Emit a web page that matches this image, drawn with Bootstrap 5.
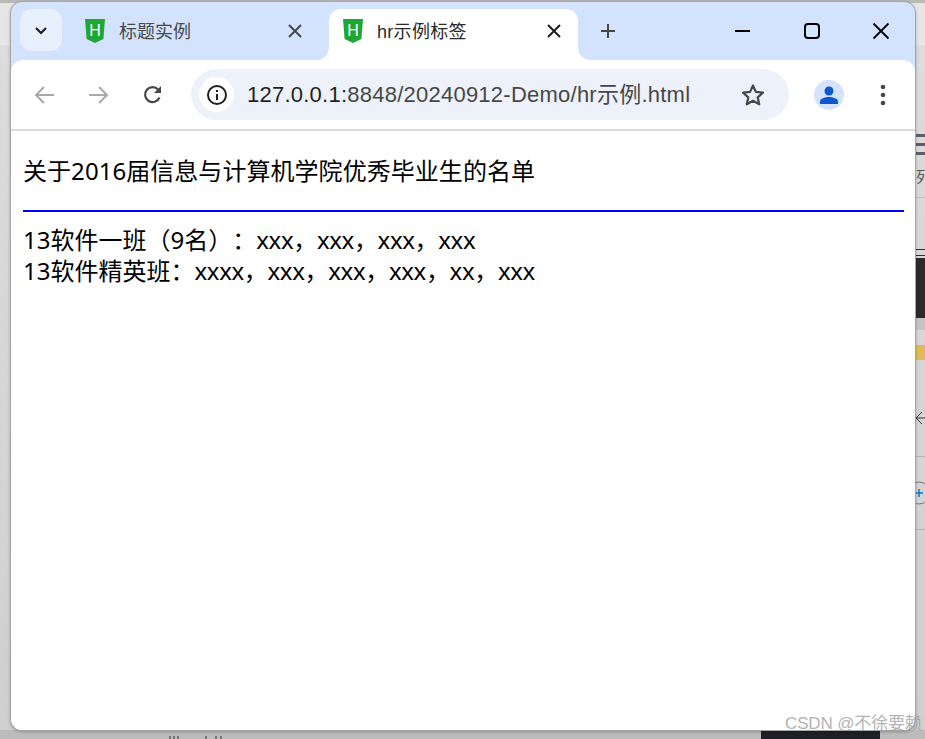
<!DOCTYPE html>
<html lang="zh-CN">
<head>
  <meta charset="UTF-8" />
  <meta name="viewport" content="width=device-width, initial-scale=1.0"/>
  <title>hr示例标签</title>
  <link href="https://cdn.jsdelivr.net/npm/bootstrap@5.3.0/dist/css/bootstrap.min.css" rel="stylesheet"/>
  <style>
    html, body { height: 100%; overflow: hidden; }
    body {
      background: #c4c4c4;
      font-family: "Liberation Sans", "Noto Sans CJK SC", sans-serif;
    }
    .desk {
      width: 925px; height: 739px;
      background: linear-gradient(#e6e6e6 0, #e6e6e6 45px, #dcdcdc 46px, #cfcfcf 100%);
    }
    .desk-top { left: 0; top: 0; width: 925px; height: 3px; background: #b9b9b9; }
    .desk-bottom { left: 0; top: 730px; width: 925px; height: 9px; background: #bcbcbc; }
    .desk-dark { left: 761px; top: 730px; width: 119px; height: 9px; background: #1f2026; }
    .desk-ticks { left: 168px; top: 736px; }
    .desk-ticks svg { display: block; }
    .side-bit { left: 916px; width: 9px; }
    .bit-bar1 { top: 134px; height: 3px; background: #5b5f6a; }
    .bit-bar2 { top: 143px; height: 3px; background: #5b5f6a; }
    .bit-bar3 { top: 152px; height: 3px; background: #5b5f6a; }
    .bit-char { top: 168px; height: 18px; font-size: 15px; line-height: 18px; color: #555; overflow: hidden; }
    .bit-line1 { top: 197px; height: 1px; background: #bdbdbd; }
    .bit-red { top: 249px; height: 7px; border-top: 1px solid #4a2030; border-bottom: 1px solid #4a2030; }
    .bit-black { top: 258px; height: 60px; background: #2b2b2b; }
    .bit-pale { top: 318px; height: 12px; background: #c4c4c4; }
    .bit-yellow { top: 345px; height: 15px; background: #e0bb55; }
    .bit-line2 { top: 456px; height: 1px; background: #b5b5b5; }
    .bit-line3 { top: 529px; height: 1px; background: #b5b5b5; }
    .bit-arrow { top: 405px; height: 20px; }
    .bit-plus { top: 480px; height: 24px; }

    .browser {
      left: 10px; top: 1px; width: 906px; height: 730px;
      border: 1px solid #a6a6a6; border-radius: 12px;
      background: #d3e3fd; overflow: hidden;
      box-shadow: 0 1px 3px rgba(0,0,0,.25);
    }
    .tab-strip { height: 58px; padding-top: 7px; padding-left: 9px; }
    .tab-search { width: 42px; height: 42px; background: #e8f0fe; border-radius: 12px; }
    .tab-item { height: 51px; padding-bottom: 8px; font-size: 18px; line-height: 24px; color: #474747; }
    .tab-off { width: 259px; margin-left: 8px; padding-left: 15px; }
    .tab-off .tab-x { margin-right: 24px; }
    .tab-on {
      width: 249px; padding-left: 14px; color: #2a2a2a;
      background: #fff; border-radius: 12px 12px 0 0;
    }
    .tab-on::before, .tab-on::after {
      content: ""; position: absolute; bottom: 0; width: 12px; height: 12px;
      background: radial-gradient(circle at 100% 0, #d3e3fd 11.5px, #fff 12px);
    }
    .tab-on::before { left: -12px; transform: scaleX(-1); }
    .tab-on::after { right: -12px; }
    .tab-title { margin-left: 14px; padding-top: 2px; flex: 1; white-space: nowrap; }
    .tab-on .tab-title { letter-spacing: .3px; }
    .tab-x { width: 20px; margin-right: 14px; }
    .tab-new { margin-left: 20px; height: 44px; }
    .win-btns { margin-left: auto; margin-right: 24px; gap: 49px; height: 44px; }
    .win-btns svg { display: block; }

    .tool-row {
      height: 69px; background: #fff; border-radius: 12px 12px 0 0;
      padding-left: 22px; position: relative;
    }
    .nav-arrows { gap: 29px; }
    .nav-forward { margin-right: 2px; }
    .omni {
      width: 598px; height: 51px; margin-left: 26px; background: #edf2fa;
      border-radius: 26px; padding-left: 8px; font-size: 22px; letter-spacing: .24px;
      color: #474747; white-space: nowrap;
    }
    .omni-info { width: 35px; height: 35px; background: #fff; margin-right: 13px; }
    .omni-host { color: #1f1f1f; }
    .omni-star { margin-left: auto; margin-right: 23px; }
    .avatar { width: 30px; height: 30px; background: #d3e3fd; margin-left: 25px; }
    .more-dots { margin-left: 36px; }
    .tool-line { height: 2px; background: #dcdcdc; }

    .page-body {
      height: 600px; background: #fff; padding: 24px 11px 0 12px;
      font-size: 24px; line-height: 31px; color: #000;
      font-family: "Noto Sans", "Noto Sans CJK SC", sans-serif;
      text-spacing-trim: space-all;
    }
    .page-title { margin: 0 0 24px; letter-spacing: .05px; }
    .blue-rule { margin: 0 0 12px; border: 0; height: 2px; background: #0000ff; opacity: 1; }
    .page-line { margin: 0; white-space: nowrap; }
    .name-run { letter-spacing: -.35px; }

    .mark-csdn {
      left: 785px; top: 714px; font-size: 17px; line-height: 20px; letter-spacing: -.15px;
      color: #9a9a9a; opacity: .75; white-space: nowrap;
    }
  </style>
</head>
<body>
  <div class="desk position-relative overflow-hidden">
    <div class="desk-top position-absolute"></div>
    <div class="desk-bottom position-absolute"></div>
    <div class="desk-dark position-absolute"></div>
    <div class="desk-ticks position-absolute">
      <svg width="60" height="3" viewBox="0 0 60 3"><path d="M2 0v3M6 0v3M10 0v3M38 0v3M48 0v3M53 0v3" stroke="#333" stroke-width="1"/></svg>
    </div>

    <div class="side-bit bit-bar1 position-absolute"></div>
    <div class="side-bit bit-bar2 position-absolute"></div>
    <div class="side-bit bit-bar3 position-absolute"></div>
    <div class="side-bit bit-char position-absolute">列</div>
    <div class="side-bit bit-line1 position-absolute"></div>
    <div class="side-bit bit-red position-absolute"></div>
    <div class="side-bit bit-black position-absolute"></div>
    <div class="side-bit bit-pale position-absolute"></div>
    <div class="side-bit bit-yellow position-absolute"></div>
    <div class="side-bit bit-arrow position-absolute">
      <svg width="9" height="20" viewBox="0 0 9 20"><path d="M9 10H0M6 4 0 10l6 6" fill="none" stroke="#333" stroke-width="1"/></svg>
    </div>
    <div class="side-bit bit-line2 position-absolute"></div>
    <div class="side-bit bit-plus position-absolute">
      <svg width="9" height="24" viewBox="0 0 9 24"><circle cx="3" cy="12" r="11" fill="none" stroke="#777"/><path d="M0 12h7M3 8v8" stroke="#0b78c9" stroke-width="1.5"/></svg>
    </div>
    <div class="side-bit bit-line3 position-absolute"></div>

    <div class="browser position-absolute">
      <div class="tab-strip d-flex align-items-start">
        <div class="tab-search d-flex align-items-center justify-content-center">
          <svg width="14" height="9" viewBox="0 0 14 9"><path d="M2 2l5 5 5-5" fill="none" stroke="#1f1f1f" stroke-width="2.2"/></svg>
        </div>
        <div class="tab-item tab-off d-flex align-items-center">
          <svg width="20" height="24" viewBox="0 0 20 24"><path d="M0 0h20l-1.6 20L10 24 1.600 20z" fill="#1fa637"/><text x="10" y="16.500" font-size="16" text-anchor="middle" fill="#fff" font-family="Liberation Sans">H</text></svg>
          <span class="tab-title">标题实例</span>
          <svg class="tab-x" width="20" height="14" viewBox="0 0 20 14"><path d="M4 1l12 12M16 1 4 13" stroke="#474747" stroke-width="2"/></svg>
        </div>
        <div class="tab-item tab-on position-relative d-flex align-items-center">
          <svg width="20" height="24" viewBox="0 0 20 24"><path d="M0 0h20l-1.6 20L10 24 1.600 20z" fill="#1fa637"/><text x="10" y="16.500" font-size="16" text-anchor="middle" fill="#fff" font-family="Liberation Sans">H</text></svg>
          <span class="tab-title">hr示例标签</span>
          <svg class="tab-x" width="20" height="14" viewBox="0 0 20 14"><path d="M4 1l12 12M16 1 4 13" stroke="#1f1f1f" stroke-width="2"/></svg>
        </div>
        <div class="tab-new d-flex align-items-center">
          <svg width="20" height="20" viewBox="0 0 20 20"><path d="M10 3v14M3 10h14" stroke="#474747" stroke-width="2"/></svg>
        </div>
        <div class="win-btns d-flex align-items-center">
          <svg width="20" height="20" viewBox="0 0 20 20"><path d="M2 10h15" stroke="#000" stroke-width="2"/></svg>
          <svg width="20" height="20" viewBox="0 0 20 20"><rect x="3" y="3" width="14" height="14" rx="3" fill="none" stroke="#000" stroke-width="2"/></svg>
          <svg width="20" height="20" viewBox="0 0 20 20"><path d="M2.500 2.500l15 15M17.500 2.500l-15 15" stroke="#000" stroke-width="1.800"/></svg>
        </div>
      </div>

      <div class="tool-row d-flex align-items-center">
        <div class="nav-arrows d-flex align-items-center">
          <svg width="24" height="24" viewBox="0 0 24 24"><path d="M21 12H4M11 4l-8 8 8 8" fill="none" stroke="#a9a9a9" stroke-width="2"/></svg>
          <svg class="nav-forward" width="24" height="24" viewBox="0 0 24 24"><path d="M3 12h17M13 4l8 8-8 8" fill="none" stroke="#a9a9a9" stroke-width="2"/></svg>
          <svg width="24" height="24" viewBox="0 0 24 24"><path d="M18.500 14.500A7.500 7.500 0 1 1 17.300 6.700" fill="none" stroke="#474747" stroke-width="2.200"/><path d="M20 3v7h-7z" fill="#474747"/></svg>
        </div>
        <div class="omni d-flex align-items-center">
          <div class="omni-info rounded-circle d-flex align-items-center justify-content-center">
            <svg width="22" height="22" viewBox="0 0 22 22"><circle cx="11" cy="11" r="9" fill="none" stroke="#1f1f1f" stroke-width="2"/><path d="M11 10v6M11 6v2" stroke="#1f1f1f" stroke-width="2"/></svg>
          </div>
          <span><span class="omni-host">127.0.0.1:</span>8848/20240912-Demo/hr示例.html</span>
          <svg class="omni-star" width="26" height="26" viewBox="0 0 26 26"><path d="M13 3.500l2.900 6.400 7 .8-5.200 4.700 1.500 6.900L13 18.800l-6.200 3.500 1.500-6.900-5.200-4.700 7-.8z" fill="none" stroke="#474747" stroke-width="2.200" stroke-linejoin="round"/></svg>
        </div>
        <div class="avatar rounded-circle d-flex align-items-center justify-content-center">
          <svg width="20" height="20" viewBox="0 0 20 20"><circle cx="10" cy="6" r="4.500" fill="#0b57d0"/><path d="M1 19v-2.500C1 13.500 6 12 10 12s9 1.500 9 4.500V19z" fill="#0b57d0"/></svg>
        </div>
        <svg class="more-dots" width="6" height="24" viewBox="0 0 6 24"><circle cx="3" cy="4" r="2.300" fill="#474747"/><circle cx="3" cy="12" r="2.300" fill="#474747"/><circle cx="3" cy="20" r="2.300" fill="#474747"/></svg>
      </div>
      <div class="tool-line"></div>

      <div class="page-body">
        <p class="page-title">关于2016届信息与计算机学院优秀毕业生的名单</p>
        <hr class="blue-rule">
        <p class="page-line">13软件一班（9名）：<span class="name-run">xxx，xxx，xxx，xxx</span></p>
        <p class="page-line">13软件精英班：<span class="name-run">xxxx，xxx，xxx，xxx，xx，xxx</span></p>
      </div>
    </div>

    <div class="mark-csdn position-absolute">CSDN @不徐要赖</div>
  </div>
  <script src="https://cdn.jsdelivr.net/npm/bootstrap@5.3.0/dist/js/bootstrap.bundle.min.js"></script>
</body>
</html>
